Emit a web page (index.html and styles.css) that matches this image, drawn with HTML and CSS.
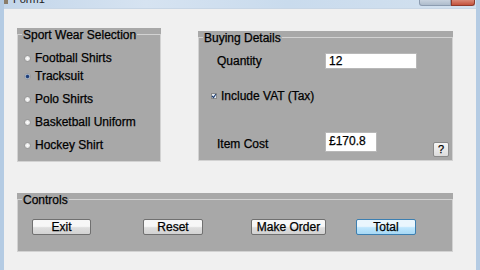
FILE: index.html
```html
<!DOCTYPE html>
<html lang="en">
<head>
  <meta charset="UTF-8">
  <meta name="viewport" content="width=device-width, initial-scale=1.0">
  <title>Form1</title>
  <link rel="stylesheet" href="styles.css">
</head>
<body>
  <div class="window">
    <div class="titlebar">
      <span class="app-icon"></span>
      <span class="caption">Form1</span>
      <span class="caption-buttons">
        <span class="cb-min"></span>
        <span class="cb-close"></span>
      </span>
    </div>
    <div class="client">
      <div class="top-row">
        <div class="group group-sport">
          <div class="group-frame">
            <div class="group-title">Sport Wear Selection</div>
            <div class="options">
              <div class="option"><span class="radio"></span>Football Shirts</div>
              <div class="option"><span class="radio checked"></span>Tracksuit</div>
              <div class="option spaced"><span class="radio"></span>Polo Shirts</div>
              <div class="option spaced"><span class="radio"></span>Basketball Uniform</div>
              <div class="option spaced"><span class="radio"></span>Hockey Shirt</div>
            </div>
          </div>
        </div>

        <div class="group group-buying">
          <div class="group-frame">
            <div class="group-title">Buying Details</div>
            <div class="field-row qty-row">
              <span class="field-label">Quantity</span>
              <span class="textbox qty-box">12</span>
            </div>
            <div class="check-row">
              <span class="checkbox">
                <svg width="6" height="6" viewBox="0 0 6 6"><path d="M1 3 L2.5 4.5 L5 1" fill="none" stroke="#1e3d6e" stroke-width="1.2"/></svg>
              </span>
              Include VAT (Tax)
            </div>
            <div class="field-row cost-row">
              <span class="field-label cost-label">Item Cost</span>
              <span class="textbox cost-box">£170.8</span>
              <button class="help-btn">?</button>
            </div>
          </div>
        </div>
      </div>

      <div class="group group-controls">
        <div class="group-frame">
          <div class="group-title">Controls</div>
          <div class="buttons">
            <button class="btn btn-exit">Exit</button>
            <button class="btn btn-reset">Reset</button>
            <button class="btn btn-order">Make Order</button>
            <button class="btn btn-total">Total</button>
          </div>
        </div>
      </div>
    </div>
  </div>
</body>
</html>
```

FILE: styles.css
```css
body {
  margin: 0;
  padding: 0;
  font-family: "Liberation Sans", Arial, sans-serif;
  font-size: 12px;
  color: #000;
  background-color: #f0f0f0;
  -webkit-text-stroke: 0.25px #000;
}
.window {
  width: 480px;
  height: 270px;
  box-sizing: border-box;
  border-left: 4px solid #b4cbe3;
  border-right: 4px solid #b4cbe3;
  background-color: #f0f0f0;
  overflow: hidden;
}
.titlebar {
  height: 8px;
  display: flex;
  align-items: flex-start;
  background: linear-gradient(to right, #c3d6ea, #d6e3f1 30%, #c9dbed 60%, #d3e1ef);
  overflow: hidden;
}
.app-icon {
  width: 6px;
  height: 4px;
  margin-left: -2px;
  background-color: #8a7d6a;
}
.caption {
  margin-left: 5px;
  margin-top: -8px;
  line-height: 14px;
  font-size: 11px;
  color: #222;
  -webkit-text-stroke: 0;
}
.caption-buttons {
  margin-left: auto;
  display: flex;
}
.cb-min {
  width: 30px;
  height: 5px;
  background: linear-gradient(#c7d2de, #aebccc);
  border: 1px solid #8c9cb0;
  border-top: none;
  border-radius: 0 0 0 3px;
}
.cb-close {
  width: 22px;
  height: 5px;
  margin-right: 1px;
  background: linear-gradient(#d98876, #c4523c);
  border: 1px solid #8f3a2c;
  border-top: none;
  border-radius: 0 0 3px 0;
}
.client {
  border-top: 1px solid #c8d6e5;
  padding: 19px 0 0 13px;
}
.top-row {
  display: flex;
  align-items: flex-start;
}

/* group boxes */
.group {
  background-color: #a8a8a8;
  padding-top: 6px;
  box-sizing: border-box;
}
.group-frame {
  height: 100%;
  box-sizing: border-box;
  border: 1px solid #d2d2d2;
}
.group-title {
  width: fit-content;
  margin: -7px 0 0 4px;
  padding: 0 1px;
  line-height: 14px;
  background-color: #a8a8a8;
}
.group-sport {
  width: 144px;
  height: 134px;
}
.group-buying {
  width: 255px;
  height: 130px;
  margin: 3px 0 0 37px;
}
.group-controls {
  width: 436px;
  height: 59px;
  margin-top: 31px;
}

/* radio list */
.options {
  margin-top: 7px;
  padding-left: 6px;
}
.option {
  height: 18px;
  line-height: 18px;
  display: flex;
  align-items: center;
}
.option.spaced {
  margin-top: 5px;
}
.radio {
  width: 5px;
  height: 5px;
  margin-right: 4px;
  border-radius: 50%;
  border: 1px solid #9a9a9a;
  background: radial-gradient(#ffffff, #d8d8d8);
}
.radio.checked {
  background: radial-gradient(#1f3f78 35%, #c9d6e6 70%);
}

/* buying details */
.field-row {
  display: flex;
  align-items: center;
  padding-left: 18px;
}
.qty-row {
  margin-top: 8px;
}
.field-label {
  width: 108px;
}
.textbox {
  box-sizing: border-box;
  background-color: #fff;
  border: 1px solid #b8b8b8;
  padding: 0 3px;
}
.qty-box {
  width: 92px;
  height: 16px;
  line-height: 14px;
}
.check-row {
  display: flex;
  align-items: center;
  height: 14px;
  margin-top: 20px;
  padding-left: 12px;
}
.checkbox {
  width: 6px;
  height: 6px;
  margin-right: 4px;
  display: flex;
  background-color: #e8eef6;
  border: 1px solid #8a8a8a;
  box-sizing: border-box;
}
.checkbox svg {
  margin: -1px;
}
.cost-row {
  margin-top: 29px;
  align-items: flex-start;
}
.cost-label {
  margin-top: 5px;
}
.cost-box {
  width: 52px;
  height: 20px;
  line-height: 14px;
  padding-top: 1px;
}
.help-btn {
  width: 16px;
  height: 15px;
  margin: 10px 3px 0 auto;
  padding: 0;
  font-family: inherit;
  font-size: 11px;
  line-height: 13px;
  border: 1px solid #8a8a8a;
  border-radius: 2px;
  background: linear-gradient(#f6f6f6, #dcdcdc);
}

/* controls */
.buttons {
  display: flex;
  margin: 12px 0 0 14px;
}
.btn {
  height: 16px;
  padding: 0;
  font-family: inherit;
  font-size: 12px;
  line-height: 14px;
  color: #000;
  border: 1px solid #707070;
  border-radius: 2px;
  background: linear-gradient(#f7f7f7 45%, #dedede 55%, #d2d2d2);
}
.btn-exit { width: 59px; }
.btn-reset { width: 60px; margin-left: 52px; }
.btn-order { width: 75px; margin-left: 48px; }
.btn-total {
  width: 60px;
  margin-left: 30px;
  border-color: #3c7fb1;
  background: linear-gradient(#eaf6fd 45%, #bee6fd 55%, #a7d9f5);
}
```
